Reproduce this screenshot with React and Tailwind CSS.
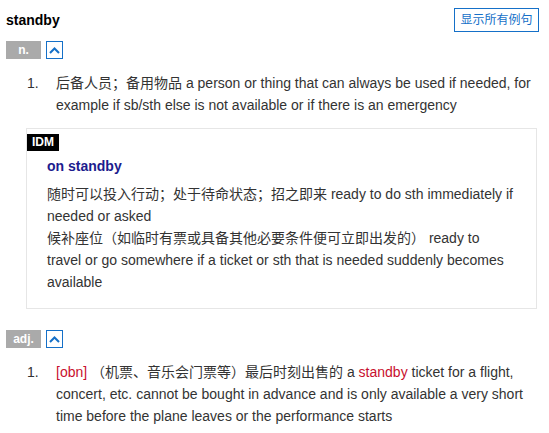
import { useState } from 'react';

const FONT = "font-['Arial','Liberation_Sans','Noto_Sans_CJK_SC',sans-serif]";

function Chevron() {
  return (
    <span className="flex h-[18px] w-[17px] items-center justify-center border border-[#1570c8] bg-white">
      <svg width="11" height="7" viewBox="0 0 11 7" fill="none">
        <path d="M1 6 L5.5 1.5 L10 6" stroke="#1570c8" strokeWidth="2" />
      </svg>
    </span>
  );
}

function PosRow({ label }) {
  return (
    <div className="flex items-center gap-[5px]">
      <span className="flex h-[18px] w-[35px] items-center justify-center bg-[#aaaaaa] text-[12px] font-bold leading-none text-white">
        {label}
      </span>
      <Chevron />
    </div>
  );
}

function Sense({ children }) {
  return (
    <div className="flex pl-[21px] text-[14px] leading-[22px] text-[#333]">
      <span className="w-[29px] shrink-0">1.</span>
      <div>{children}</div>
    </div>
  );
}

export default function App() {
  const [showAll, setShowAll] = useState(false);

  return (
    <div className={`${FONT} min-h-[433px] w-[549px] bg-white pl-[6px] pr-[10px] text-[#333]`}>
      {/* headword + toggle */}
      <div className="flex items-center justify-between pt-[8px]">
        <h1 className="text-[14px] font-bold leading-[20px] text-black">standby</h1>
        <button
          onClick={() => setShowAll(!showAll)}
          className="h-[24px] w-[85px] border border-[#1570c8] text-[12px] leading-none text-[#1570c8]"
        >
          显示所有例句
        </button>
      </div>

      <div className="mt-[9px]">
        <PosRow label="n." />
      </div>

      <div className="mt-[13px]">
        <Sense>
          后备人员；备用物品 a person or thing that can always be used if needed, for example if
          sb/sth else is not available or if there is an emergency
        </Sense>
      </div>

      {/* idiom box */}
      <div className="ml-[20px] mr-[2px] mt-[12px] border border-[#e6e6e6] pb-[15px]">
        <span className="inline-block h-[17px] bg-black px-[5px] text-[12px] font-bold leading-[17px] text-white">
          IDM
        </span>
        <div className="pl-[20px] pr-[22px] pt-[2px] text-[14px] leading-[22px]">
          <div className="font-bold text-[#1c1c8e]">on standby</div>
          <p className="mt-[6px]">
            随时可以投入行动；处于待命状态；招之即来 ready to do sth immediately if needed or asked
          </p>
          <p>
            候补座位（如临时有票或具备其他必要条件便可立即出发的） ready to travel or go somewhere if a
            ticket or sth that is needed suddenly becomes available
          </p>
        </div>
      </div>

      <div className="mt-[21px]">
        <PosRow label="adj." />
      </div>

      <div className="mt-[13px]">
        <Sense>
          <span className="text-[#c8102e]">[obn]</span> （机票、音乐会门票等）最后时刻出售的 a{' '}
          <span className="text-[#c8102e]">standby</span> ticket for a flight, concert, etc. cannot
          be bought in advance and is only available a very short time before the plane leaves or
          the performance starts
        </Sense>
      </div>
    </div>
  );
}
